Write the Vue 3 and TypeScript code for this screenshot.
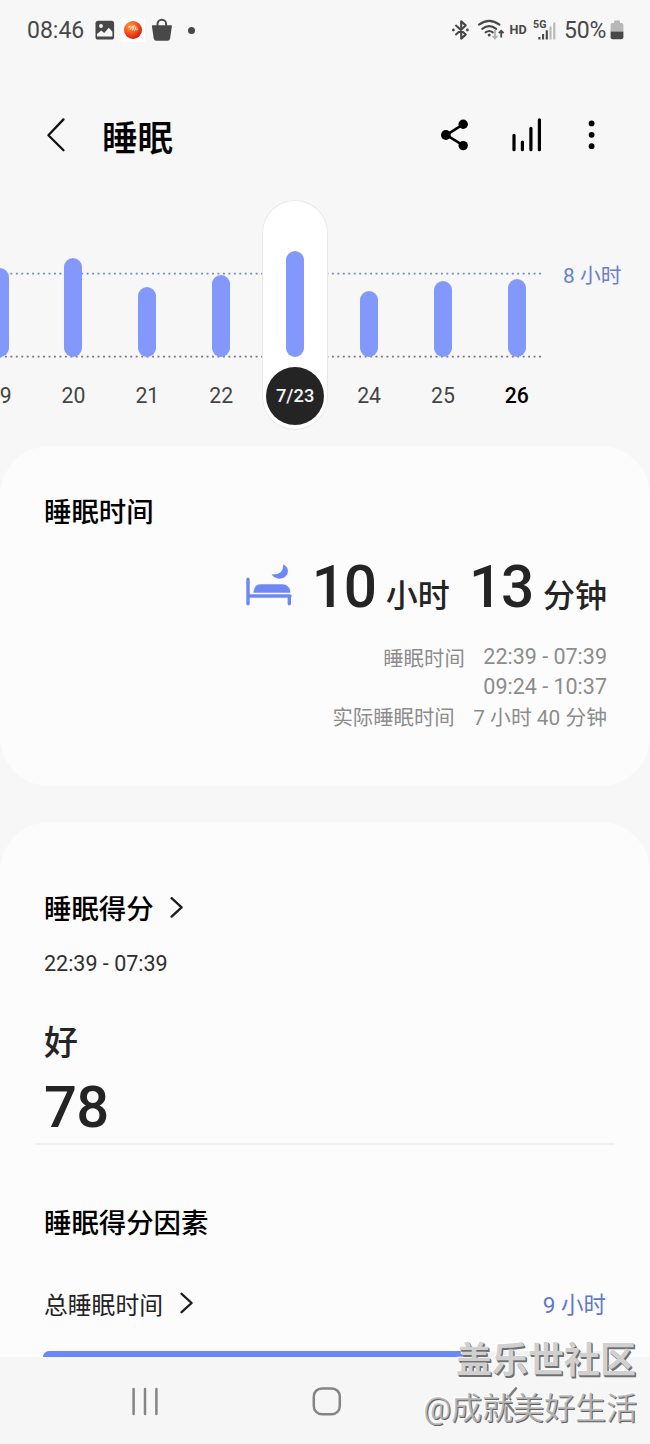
<script setup lang="ts">
interface Day {
  label: string
  height: number
  selected?: boolean
  today?: boolean
}

const days: Day[] = [
  { label: '19', height: 89.5 },
  { label: '20', height: 99 },
  { label: '21', height: 70 },
  { label: '22', height: 82 },
  { label: '7/23', height: 106.5, selected: true },
  { label: '24', height: 66 },
  { label: '25', height: 76.5 },
  { label: '26', height: 78, today: true },
]
</script>

<template>
  <div class="screen">
    <header class="status">
      <span class="clock">08:46</span>
      <svg class="st-photo" width="20" height="20" viewBox="0 0 20 20">
        <rect x="0.5" y="0.7" width="18.6" height="18.8" rx="2.6" fill="#484848" />
        <circle cx="6" cy="6" r="1.9" fill="#f7f7f7" />
        <path d="M2 16.6V14l4.2-3.6 3 2.6 4.6-5.2 3.6 4v4.8z" fill="#f7f7f7" />
      </svg>
      <svg class="st-app" width="24" height="24" viewBox="0 0 24 24">
        <defs>
          <radialGradient id="ball" cx="0.35" cy="0.3" r="0.75">
            <stop offset="0" stop-color="#ff9a3c" />
            <stop offset="0.5" stop-color="#f8541c" />
            <stop offset="1" stop-color="#cc1c10" />
          </radialGradient>
        </defs>
        <rect width="24" height="24" fill="#fff" />
        <circle cx="12" cy="12" r="9" fill="url(#ball)" />
        <path d="M7.5 9.5l2-1.5M9 11.5l3-3.5M11.5 12.5l2-5.5M13.5 12.8l1.6-4M15.5 12.2l1-1.6" stroke="#ffe6d8" stroke-width="1.1" fill="none" />
      </svg>
      <svg class="st-bag" width="22" height="24" viewBox="0 0 22 24">
        <path d="M6.5 8V6a4.3 4.3 0 0 1 8.6 0v2" fill="none" stroke="#484848" stroke-width="2" />
        <path d="M1.6 7.2h18.6q.8 0 .7.8l-1.8 12.4q-.3 2.3-2.6 2.3H5.3q-2.3 0-2.6-2.3L.9 8q-.1-.8.7-.8z" fill="#484848" />
      </svg>
      <span class="st-dot"></span>
      <span class="grow"></span>
      <svg class="st-right" width="112" height="26" viewBox="0 0 112 26">
        <g fill="none" stroke="#484848" stroke-width="2.1" stroke-linejoin="round" stroke-linecap="round">
          <path d="M4 8.6l9.7 9-4.5 4V4.4l4.5 4-9.7 9" />
        </g>
        <circle cx="1.4" cy="13" r="1.4" fill="#484848" />
        <circle cx="15.4" cy="13" r="1.4" fill="#484848" />
        <g fill="none" stroke="#484848" stroke-width="2.1" stroke-linecap="round">
          <path d="M27 7.6q10.2-7.6 20.4 0" />
          <path d="M30.2 11.8q7-5.4 14 0" />
          <path d="M33.6 15.4q3.6-2.8 7.2 0" />
        </g>
        <circle cx="37.2" cy="18" r="1.5" fill="#484848" />
        <path d="M43 13v8M40.7 18.8l2.3 2.5 2.3-2.5" fill="none" stroke="#b0b0b0" stroke-width="1.8" />
        <path d="M49.2 20.6v-6.8M46.8 16.2l2.4-2.5 2.4 2.5" fill="none" stroke="#484848" stroke-width="1.8" />
        <text x="57.5" y="17" font-size="12.6" font-weight="700" letter-spacing="-0.6" textLength="16.5" fill="#484848">HD</text>
        <text x="81" y="11" font-size="10.6" font-weight="700" textLength="13.5" fill="#484848">5G</text>
        <g stroke-width="2.1">
          <path d="M87.4 22.6v-2.6M91.1 22.6v-5.6M94.8 22.6v-9.3" stroke="#484848" />
          <path d="M98.5 22.6V9.6M102.3 22.6V5.6" stroke="#b8b8b8" />
        </g>
      </svg>
      <span class="percent">50%</span>
      <svg class="st-batt" width="14" height="20" viewBox="0 0 14 20">
        <path d="M4 3V1.6Q4 .6 5 .6h4q1 0 1 1V3h1.4q2 0 2 2v6.6H.6V5q0-2 2-2z" fill="#b8b8b8" />
        <path d="M.6 11.4h12.8v5.8q0 2-2 2H2.6q-2 0-2-2z" fill="#484848" />
      </svg>
    </header>

    <div class="toolbar">
      <svg class="back" width="20" height="36" viewBox="0 0 20 36">
        <path d="M17.5 2.4L2.4 18.2l15.1 15" fill="none" stroke="#111" stroke-width="2.3" stroke-linecap="round" stroke-linejoin="round" />
      </svg>
      <h1>睡眠</h1>
      <span class="grow"></span>
      <svg class="share" width="28" height="32" viewBox="0 0 28 32">
        <path d="M22.5 5.2L5.5 16l17 10.6" fill="none" stroke="#000" stroke-width="2.6" />
        <circle cx="4.9" cy="16" r="4.9" />
        <circle cx="22.2" cy="5.2" r="4.7" />
        <circle cx="22.2" cy="26.6" r="4.7" />
      </svg>
      <svg class="stats" width="32" height="36" viewBox="0 0 32 36">
        <path d="M3 18.3v14.4M11.4 25v7.7M19.9 11.3v21.4M28.4 2.9v29.8" stroke="#000" stroke-width="3.2" stroke-linecap="round" />
      </svg>
      <svg class="more" width="8" height="32" viewBox="0 0 8 32">
        <circle cx="3.6" cy="4.4" r="2.9" /><circle cx="3.6" cy="15.8" r="2.9" /><circle cx="3.6" cy="27.2" r="2.9" />
      </svg>
    </div>

    <section class="chart">
      <svg class="guides" width="650" height="90" viewBox="0 0 650 90">
        <path d="M0 3.6H544" stroke="#7489c4" stroke-width="1.8" stroke-dasharray="1.9 3.55" stroke-dashoffset="0.5" />
        <path d="M0 86.6H544" stroke="#74767f" stroke-width="1.8" stroke-dasharray="1.9 3.55" stroke-dashoffset="0.5" />
      </svg>
      <div class="days">
        <div v-for="d in days" :key="d.label" class="day" :class="{ selected: d.selected, today: d.today }">
          <div class="slot">
            <div class="bar" :style="{ height: d.height + 'px' }"></div>
          </div>
          <span class="date">{{ d.label }}</span>
        </div>
      </div>
      <span class="goal">8 小时</span>
    </section>

    <section class="card duration">
      <h2>睡眠时间</h2>
      <div class="total">
        <svg class="bed" width="46" height="44" viewBox="0 0 46 44" fill="#6d88f4">
          <path d="M2 15.2v24.6M3 32h41M43.3 32v7.8" fill="none" stroke="#6d88f4" stroke-width="3.4" stroke-linecap="round" />
          <path d="M7.5 28.7v-.8q.6-7.6 7.6-7.6h21q7.3 0 8.2 7.6v.8z" />
          <path d="M37.4.2q6.4 4.4 4 9.9-3 5.4-9.4 4.4-4.7-1-6.4-4.2 11.6 1.2 11.8-10.1z" />
        </svg>
        <span class="big">10</span><span class="unit">小时</span>
        <span class="big second">13</span><span class="unit">分钟</span>
      </div>
      <div class="row"><span class="cjk">睡眠时间</span><span class="val">22:39 - 07:39</span></div>
      <div class="row"><span class="val">09:24 - 10:37</span></div>
      <div class="row last"><span class="cjk">实际睡眠时间</span><span class="val mixed">7 小时 40 分钟</span></div>
    </section>

    <section class="card score">
      <h2>睡眠得分
        <svg class="chev" width="14" height="22" viewBox="0 0 14 22"><path d="M1.6 1.2l10 9.2-10 9.2" /></svg>
      </h2>
      <p class="range">22:39 - 07:39</p>
      <p class="grade">好</p>
      <p class="points">78</p>
      <hr />
      <h2 class="factors">睡眠得分因素</h2>
      <div class="factor">
        <span>总睡眠时间</span>
        <svg class="chev" width="14" height="22" viewBox="0 0 14 22"><path d="M1.6 1.8l10 9.2-10 9.2" /></svg>
        <span class="grow"></span>
        <span class="hours">9 小时</span>
      </div>
      <div class="track"><div class="fill"></div></div>
    </section>

    <nav>
      <svg width="650" height="87" viewBox="0 0 650 87" fill="none" stroke="#858585" stroke-width="2.5" stroke-linecap="round" stroke-linejoin="round">
        <path d="M133.6 32v25M145 32v25M156.4 32v25" />
        <rect x="313.8" y="31.4" width="26" height="25.8" rx="8" />
        <path d="M516 31.4l-11 12.8 11 13" stroke="#808080" />
      </svg>
    </nav>

    <div class="watermark">
      <div class="community">盖乐世社区</div>
      <div class="author">@成就美好生活</div>
    </div>
  </div>
</template>

<style>
body {
  background: #f7f7f7;
}
</style>

<style scoped>
.screen {
  position: relative;
  width: 650px;
  height: 1444px;
  overflow: hidden;
  display: flex;
  flex-direction: column;
  background: #f7f7f7;
  color: #000;
  font-family: Roboto, "Noto Sans CJK SC", sans-serif;
}
h1, h2, p, hr {
  margin: 0;
  font-weight: 500;
}
.grow {
  flex: 1;
}
.status {
  height: 60px;
  display: flex;
  align-items: center;
  padding: 0 26px 0 27px;
  color: #484848;
  font-size: 23px;
  white-space: nowrap;
}
.clock {
  width: 58px;
  line-height: 28px;
  padding-top: 1px;
}
.st-photo {
  margin-left: 10px;
}
.st-app {
  margin-left: 6px;
}
.st-bag {
  margin-left: 6px;
}
.st-dot {
  width: 7px;
  height: 7px;
  border-radius: 50%;
  margin-left: 15px;
  background: #484848;
}
.percent {
  width: 44px;
  line-height: 28px;
  padding-top: 1px;
  letter-spacing: -0.2px;
}
.st-batt {
  margin-left: 2px;
}
.toolbar {
  height: 150px;
  display: flex;
  align-items: center;
  padding: 0 54px 0 46px;
}
.back {
  display: block;
}
h1 {
  margin-left: 36px;
  padding-top: 7px;
  font-size: 35.6px;
  line-height: 44px;
  -webkit-text-stroke: 0.2px #000;
}
.share {
  overflow: visible;
}
.stats {
  margin-left: 42px;
}
.more {
  margin-left: 45px;
}
.chart {
  position: relative;
  height: 236px;
  margin-top: -10px;
}
.guides {
  position: absolute;
  left: 0;
  top: 70px;
}
.days {
  position: relative;
  display: flex;
  margin-left: -37.3px;
  width: 591px;
}
.day {
  flex: 1;
  display: flex;
  flex-direction: column;
  align-items: center;
}
.slot {
  width: 66px;
  height: 157px;
  display: flex;
  align-items: flex-end;
  justify-content: center;
}
.bar {
  width: 18px;
  border-radius: 9px;
  background: #8299fb;
}
.date {
  margin-top: 10px;
  height: 58px;
  line-height: 58px;
  font-size: 21.2px;
  color: #444;
}
.selected {
  margin: 0 4px;
  height: 230px;
  flex: 0 0 66px;
  background: #fff;
  border-radius: 33px;
  box-shadow: inset 0 0 0 1px #e8e8e8;
}
.selected .date {
  width: 58px;
  border-radius: 50%;
  background: #242424;
  color: #f4f4f4;
  font-size: 18.3px;
  font-weight: 500;
  text-align: center;
}
.today .date {
  color: #000;
  font-weight: 500;
}
.goal {
  position: absolute;
  right: 28.5px;
  top: 61px;
  line-height: 30px;
  font-size: 20.8px;
  color: #687fcb;
}
.card {
  box-sizing: border-box;
  background: #fcfcfc;
  border-radius: 50px;
}
h2 {
  font-size: 27.4px;
  line-height: 40px;
}
.duration {
  margin-top: 10px;
  height: 340px;
  padding: 47px 43px 0 44px;
  color: #242424;
}
.duration h2 {
  color: #000;
}
.total {
  display: flex;
  justify-content: flex-end;
  align-items: baseline;
  height: 70px;
  margin-top: 19px;
  line-height: 70px;
  font-weight: 500;
}
.bed {
  align-self: flex-start;
  margin: 12px 20px 0 0;
}
.big {
  font-size: 58.5px;
  letter-spacing: -1.2px;
}
.unit {
  font-size: 32px;
  margin-left: 10px;
}
.second {
  margin-left: 19px;
}
.row {
  display: flex;
  justify-content: flex-end;
  height: 30px;
  line-height: 30px;
  gap: 18.5px;
  font-size: 20.4px;
  color: #8c8c8c;
}
.total + .row {
  margin-top: 20px;
}
.cjk {
  padding-top: 2px;
}
.last {
  padding-top: 1px;
}
.last .cjk {
  padding-top: 0;
}
.val {
  font-size: 21.5px;
}
.val.mixed {
  font-size: 20.8px;
}
.score {
  margin-top: 36px;
  height: 535px;
  padding: 68px 44px 0;
  border-radius: 50px 50px 0 0;
  overflow: hidden;
}
.chev {
  fill: none;
  stroke: #1c1c1c;
  stroke-width: 2.3;
  stroke-linecap: round;
  stroke-linejoin: round;
}
.score h2 {
  display: flex;
  align-items: center;
  gap: 16px;
}
.score h2 .chev {
  margin-top: -5px;
}
.range {
  margin-top: 19px;
  line-height: 30px;
  font-size: 21.5px;
  font-weight: 400;
  color: #303030;
}
.grade {
  margin-top: 41px;
  line-height: 46px;
  font-size: 34px;
  color: #242424;
}
.points {
  margin-top: 6px;
  line-height: 70px;
  font-size: 58px;
  letter-spacing: -0.6px;
  color: #242424;
}
hr {
  margin: 1px -8px 0;
  border: 0;
  height: 2px;
  background: #f0f0f0;
}
.score .factors {
  margin-top: 59px;
}
.factor {
  display: flex;
  align-items: center;
  height: 40px;
  margin-top: 39px;
  font-size: 23.8px;
  color: #222;
}
.factor .chev {
  margin-left: 17px;
}
.hours {
  color: #5f78cc;
  font-size: 22.5px;
}
.track {
  height: 12px;
  margin: 28px 0 0 -1px;
  border-radius: 6px;
  background: #f1f1f3;
}
.fill {
  width: 422px;
  height: 12px;
  border-radius: 6px 0 0 6px;
  background: #6d88f4;
}
nav {
  height: 87px;
  background: #f6f6f6;
}
nav svg {
  display: block;
}
.watermark {
  position: absolute;
  right: 13px;
  top: 1337px;
  text-align: right;
  white-space: nowrap;
}
.community {
  margin-right: 1px;
  font-size: 36px;
  line-height: 48px;
  font-weight: 700;
  color: #d0d0d0;
  text-shadow: 1px 1px 0 #707070, 1.5px 1.5px 0 #707070, -1px -1px 0 #fff;
}
.author {
  font-size: 31px;
  line-height: 48px;
  color: rgba(190, 190, 190, 0.85);
  text-shadow: 1px 1px 0 #646464, -1px -1px 0 #fff;
}
</style>
